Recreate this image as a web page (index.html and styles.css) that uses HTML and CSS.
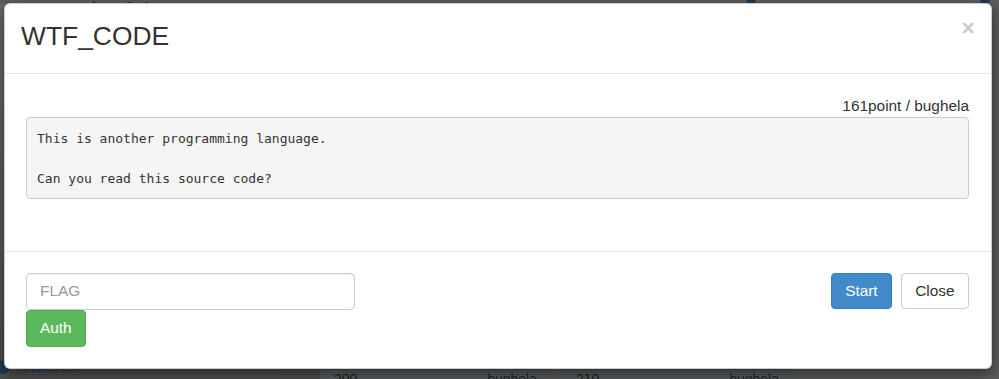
FILE: index.html
```html
<!DOCTYPE html>
<html lang="en">
<head>
  <meta charset="UTF-8" />
  <title>WTF_CODE - wargame.kr</title>
  <link rel="stylesheet" href="styles.css">
</head>

<body>
  <!-- page behind the modal, already dimmed by the backdrop -->
  <div class="page">
    <div class="page-top">
      <span class="brand">wargame.kr v2.1</span>
      <span class="dot dot-a"></span>
      <span class="dot dot-b"></span>
    </div>
    <div class="page-main">
      <aside class="side">
        <div class="side-link"><span class="side-icon"></span>Tutorial</div>
      </aside>
      <div class="gutter"></div>
      <div class="cards">
        <div class="card"><span>200</span><span class="card-by">bughela</span></div>
        <div class="card"><span>210</span><span class="card-by">bughela</span></div>
      </div>
    </div>
  </div>

  <div class="modal">
    <div class="modal-header">
      <h3 class="modal-title">WTF_CODE</h3>
      <button class="close" type="button">&times;</button>
    </div>

    <div class="modal-body">
      <div class="meta">161point / bughela</div>
      <pre class="desc">This is another programming language.

Can you read this source code?</pre>
    </div>

    <div class="modal-footer">
      <div class="flag-form">
        <input type="text" class="flag-input" placeholder="FLAG" />
        <button class="btn btn-success" type="button">Auth</button>
      </div>
      <div class="footer-btns">
        <button class="btn btn-primary" type="button">Start</button>
        <button class="btn btn-default" type="button">Close</button>
      </div>
    </div>
  </div>
</body>
</html>
```

FILE: styles.css
```css
/* === Basic Reset === */
* {
  margin: 0;
  padding: 0;
  box-sizing: border-box;
}

body {
  font-family: 'Liberation Sans', Arial, sans-serif;
  background: #5c5c5c;
  color: #333;
  height: 379px;
  overflow: hidden;
}

/* === Dimmed page behind === */
.page {
  height: 379px;
  display: flex;
  flex-direction: column;
}

.page-top {
  height: 4px;
  overflow: hidden;
  display: flex;
  align-items: flex-end;
  background: #5e5e5e;
  position: relative;
}

.brand {
  font-size: 20px;
  line-height: 18px;
  color: #2e2e2e;
  padding-left: 4px;
  margin-bottom: -14px;
}

.dot {
  position: absolute;
  top: -6px;
  width: 10px;
  height: 10px;
  border-radius: 50%;
  background: #1f3b57;
}

.dot-a { left: 746px; }
.dot-b { left: 980px; }

.page-main {
  flex: 1;
  display: flex;
}

.side {
  width: 282px;
  background: linear-gradient(180deg, #6a6a6a, #4e4e4e);
  display: flex;
  align-items: flex-end;
}

.side-link {
  display: flex;
  align-items: center;
  gap: 10px;
  font-size: 18px;
  color: #22405e;
  margin-bottom: 2px;
  margin-left: -4px;
}

.side-icon {
  width: 14px;
  height: 14px;
  border-radius: 50%;
  background: #1d3d5c;
}

.gutter {
  width: 38px;
  background: #4f4f4f;
}

.cards {
  flex: 1;
  display: flex;
  gap: 11px;
  align-items: flex-end;
}

.card {
  width: 231px;
  height: 10px;
  background: #585d60;
  border-top: 1px solid #4a4e50;
  display: flex;
  justify-content: space-between;
  padding: 2px 14px 0;
  font-size: 14px;
  line-height: 14px;
  color: #1e1e1e;
  overflow: hidden;
}

.card-by {
  color: #262626;
}

/* === Modal === */
.modal {
  position: absolute;
  left: 4px;
  top: 3px;
  width: 988px;
  background: #fff;
  border: 1px solid rgba(0, 0, 0, 0.2);
  border-radius: 6px;
  box-shadow: 0 5px 15px rgba(0, 0, 0, 0.5);
}

.modal-header {
  display: flex;
  justify-content: space-between;
  padding: 18px 16px 22px;
  border-bottom: 1px solid #e5e5e5;
}

.modal-title {
  font-size: 26.4px;
  font-weight: normal;
  line-height: 29px;
  color: #333;
}

.close {
  align-self: flex-start;
  background: none;
  border: none;
  font-family: 'Liberation Sans', Arial, sans-serif;
  font-size: 23px;
  font-weight: bold;
  line-height: 23px;
  color: #000;
  opacity: 0.2;
  margin-top: -5px;
  cursor: pointer;
}

.modal-body {
  padding: 22px 22px 52px 21px;
}

.meta {
  text-align: right;
  font-size: 15.4px;
  line-height: 20.5px;
  color: #333;
}

.desc {
  font-family: 'DejaVu Sans Mono', 'Liberation Mono', monospace;
  font-size: 13px;
  line-height: 20px;
  color: #333;
  background: #f5f5f5;
  border: 1px solid #ccc;
  border-radius: 4px;
  padding: 11px 10px 9px;
  white-space: pre-wrap;
}

.modal-footer {
  display: flex;
  justify-content: space-between;
  align-items: flex-start;
  padding: 21px 22px 21px 21px;
  border-top: 1px solid #e5e5e5;
}

.flag-form {
  display: flex;
  flex-direction: column;
  align-items: flex-start;
}

.flag-input {
  width: 329px;
  height: 37px;
  padding: 6px 13px;
  font-family: 'Liberation Sans', Arial, sans-serif;
  font-size: 15.4px;
  color: #555;
  border: 1px solid #ccc;
  border-radius: 4px;
  box-shadow: inset 0 1px 1px rgba(0, 0, 0, 0.075);
}

.flag-input::placeholder {
  color: #999;
}

.btn {
  height: 37px;
  padding: 0 13px;
  font-family: 'Liberation Sans', Arial, sans-serif;
  font-size: 15.4px;
  border: 1px solid transparent;
  border-radius: 4px;
  cursor: pointer;
}

.btn-success {
  background: #5cb85c;
  border-color: #4cae4c;
  color: #fff;
}

.footer-btns {
  display: flex;
  gap: 9px;
}

.footer-btns .btn {
  height: 36px;
}

.btn-primary {
  background: #428bca;
  border-color: #357ebd;
  color: #fff;
}

.btn-default {
  background: #fff;
  border-color: #ccc;
  color: #333;
  padding: 0 13.5px;
}
```
